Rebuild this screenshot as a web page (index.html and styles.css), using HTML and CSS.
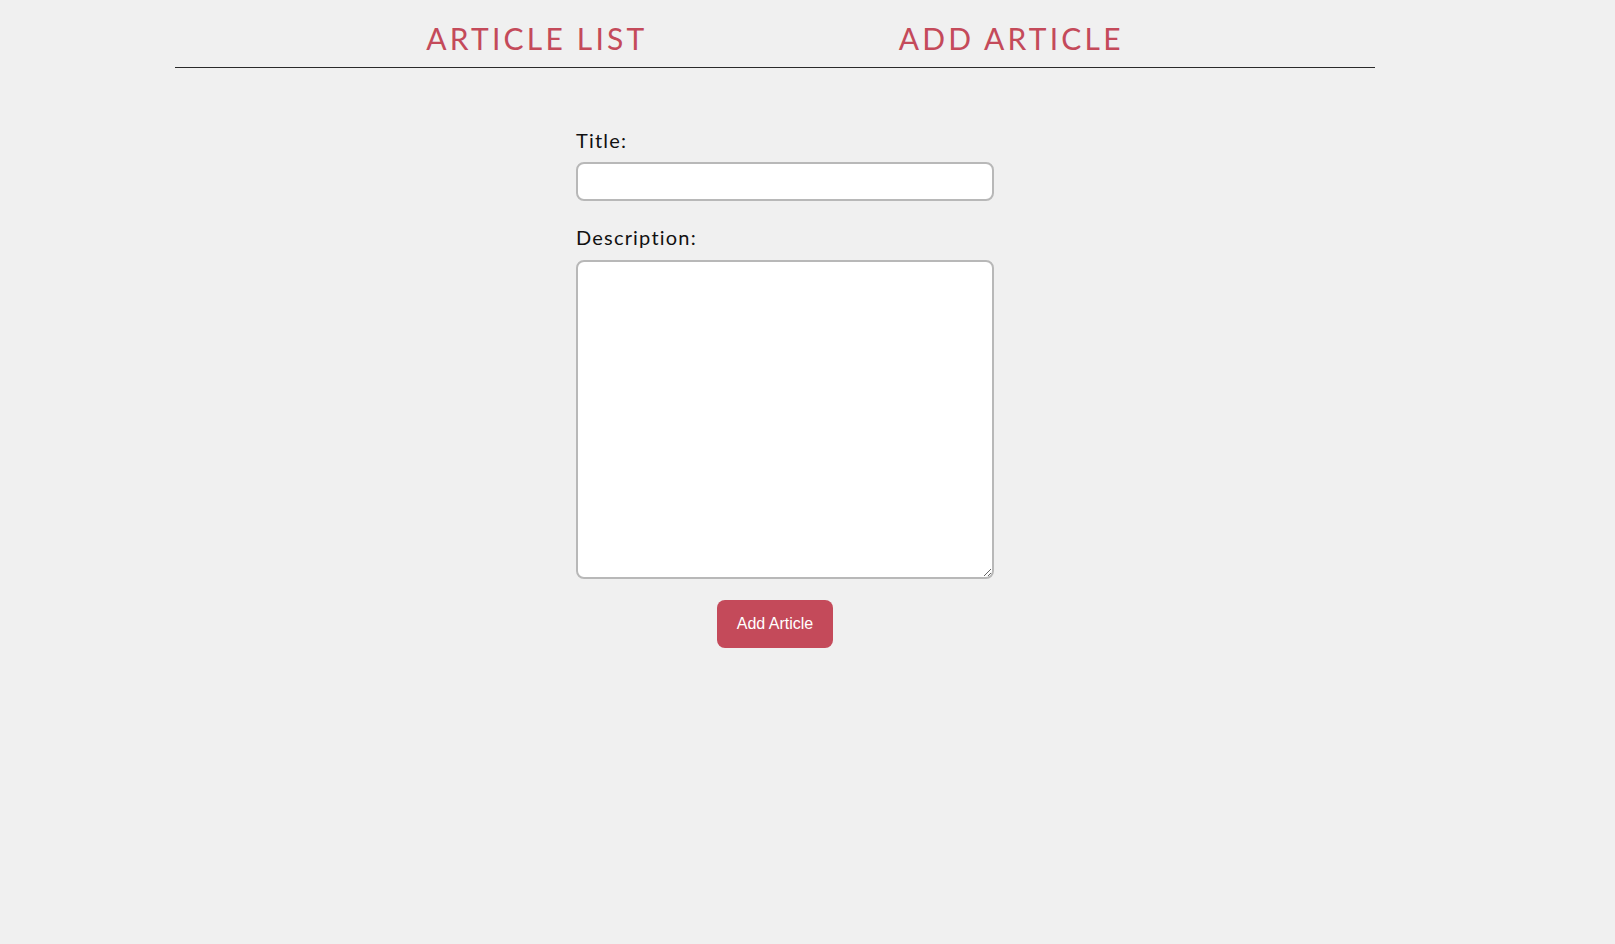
FILE: index.html
```html
<!DOCTYPE html>
<html lang="en">
<head>
<meta charset="utf-8">
<title>Add Article</title>
<link rel="stylesheet" href="styles.css">
</head>
<body>
<div class="page">
  <nav class="nav">
    <a class="nav-link" href="#">ARTICLE LIST</a>
    <a class="nav-link" href="#">ADD ARTICLE</a>
  </nav>
  <form class="form">
    <label class="label" for="title">Title:</label>
    <input class="field" id="title" type="text">
    <label class="label label-desc" for="desc">Description:</label>
    <textarea class="field area" id="desc"></textarea>
    <div class="actions">
      <button class="btn" type="button">Add Article</button>
    </div>
  </form>
</div>
</body>
</html>
```

FILE: styles.css
```css
html, body {
  margin: 0;
  padding: 0;
  background: #f0f0f0;
}
body {
  font-family: Lato, "Open Sans", sans-serif;
}
.page {
  width: 1200px;
  margin-left: 175px;
}
.nav {
  display: flex;
  justify-content: space-evenly;
  border-bottom: 1px solid #2a2a2a;
  padding-top: 20px;
  box-sizing: border-box;
  height: 68px;
}
.nav-link {
  color: #c44a5a;
  text-decoration: none;
  font-size: 30px;
  letter-spacing: 3.2px;
  line-height: 36px;
}
.form {
  width: 398px;
  margin: 0 auto;
  padding-top: 60px;
}
.label {
  display: block;
  font-size: 20px;
  line-height: 24px;
  color: #111;
  margin-bottom: 10px;
  letter-spacing: 1.2px;
}
.label-desc {
  margin-top: 24px;
  margin-bottom: 11px;
}
.field {
  display: block;
  width: 100%;
  box-sizing: content-box;
  padding: 0 8px;
  height: 35px;
  border: 2px solid #b8b8b8;
  border-radius: 8px;
  background: #fff;
  font-size: 16px;
  margin: 0;
}
.area {
  height: 315px;
  resize: vertical;
}
.actions {
  display: flex;
  justify-content: center;
  margin-top: 21px;
}
.btn {
  background: #c44a5a;
  color: #fff;
  border: none;
  border-radius: 8px;
  font-family: "Liberation Sans", Arial, sans-serif;
  font-size: 16px;
  height: 48px;
  padding: 0 20px;
}
```
